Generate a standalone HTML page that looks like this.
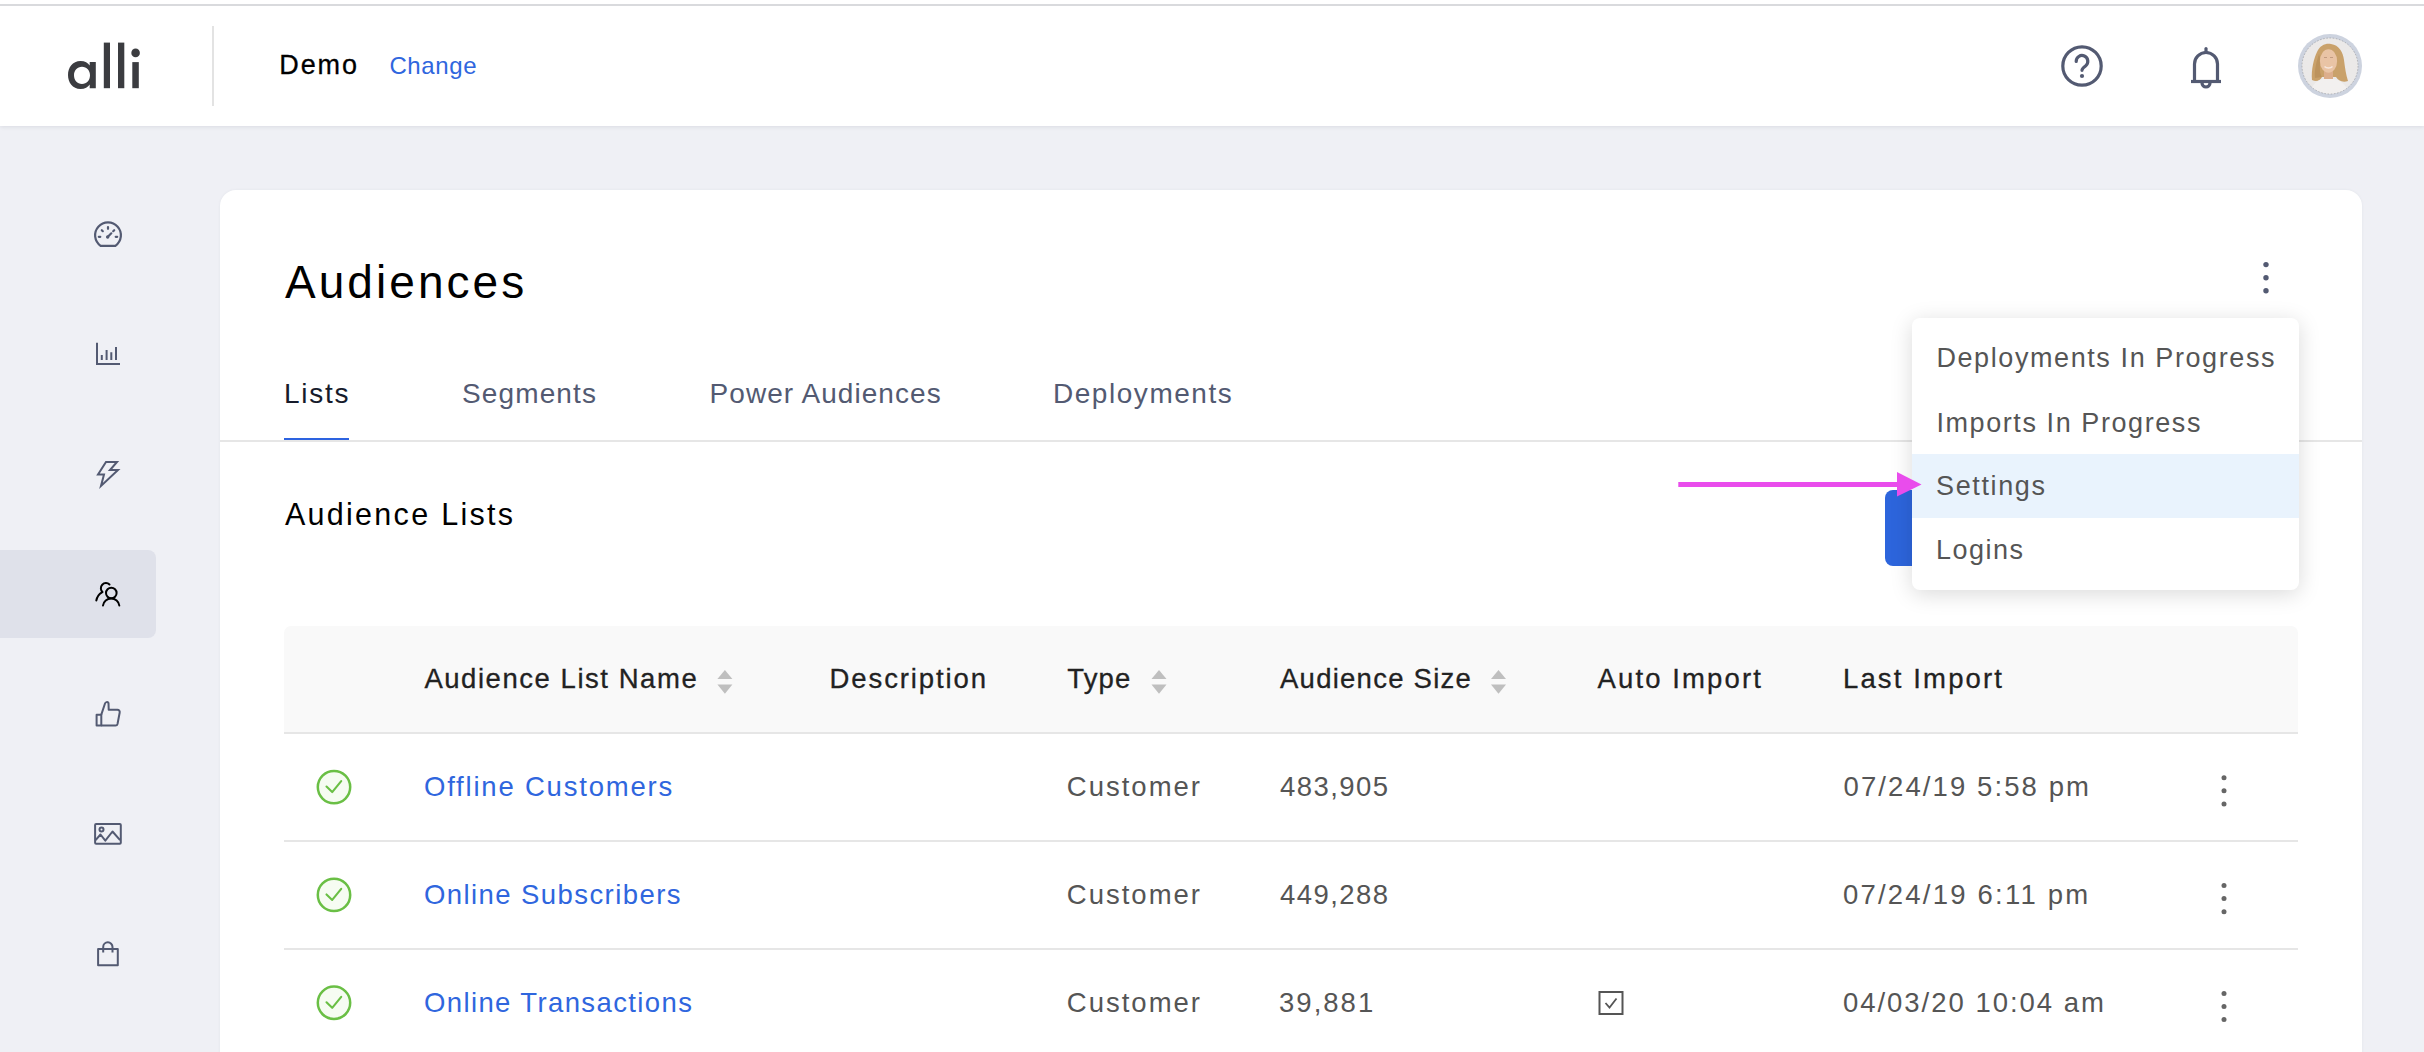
<!DOCTYPE html><html><head><meta charset="utf-8"><style>
*{margin:0;padding:0;box-sizing:border-box}
html,body{width:2424px;height:1052px;overflow:hidden;background:#eff0f5;font-family:"Liberation Sans",sans-serif}
.t{position:absolute;white-space:nowrap}
.abs{position:absolute}
svg{position:absolute;left:0;top:0;overflow:visible}
</style></head><body><div class="abs" style="left:0;top:0;width:2424px;height:126px;background:#fff;box-shadow:0 1px 4px rgba(40,45,70,0.10)"></div>
<div class="abs" style="left:0;top:4px;width:2424px;height:2px;background:#d9dadd"></div>
<div class="abs" style="left:212px;top:26px;width:2px;height:80px;background:#e3e3e3"></div>
<svg width="2424" height="1052" style="pointer-events:none">
<g fill="#3b3c40">
<path fill-rule="evenodd" d="M80.5,61 C72.5,61 68,67.5 68,75 C68,82.5 72.5,89 80.5,89 C85,89 88,87 89.7,84.5 V88.2 H95.8 V62.1 H89.7 V65.5 C88,63 85,61 80.5,61 Z M82,66.8 C86.8,66.8 90,70.5 90,75.3 C90,80.2 86.8,83.9 82,83.9 C77.2,83.9 74,80.2 74,75.3 C74,70.5 77.2,66.8 82,66.8 Z"/>
<rect x="103.8" y="42.6" width="6.2" height="45.6"/>
<rect x="118" y="42.6" width="6.3" height="45.6"/>
<rect x="132.3" y="62.1" width="6.5" height="26.1"/>
<circle cx="135.6" cy="52.9" r="4.3"/>
</g>
</svg>
<div class="t" style="left:279.30px;top:51.54px;font-size:27px;line-height:27px;letter-spacing:1.9px;color:#000;-webkit-text-stroke:0.3px #000">Demo</div>
<div class="t" style="left:389.40px;top:54.48px;font-size:24px;line-height:24px;letter-spacing:0.62px;color:#2f66de;">Change</div>
<svg width="2424" height="1052">
<g fill="none" stroke="#535a72" stroke-width="3.2" stroke-linecap="round" stroke-linejoin="round">
<circle cx="2082" cy="66" r="19.2"/>
<path d="M2076.2,61.5 a5.8,5.8 0 1 1 9.5,4.3 c-2.2,1.7 -3.7,2.8 -3.7,4.5"/>
<path d="M2194.5,81.5 V64 a11.5,11.5 0 0 1 23,0 V81.5"/>
<path d="M2191,81.5 H2221" stroke-linecap="butt"/>
<path d="M2206,48.5 V52"/>
<path d="M2202,83 a4,4 0 0 0 8,0"/>
</g>
<circle cx="2082" cy="76" r="2.1" fill="#535a72"/>
</svg>
<svg width="2424" height="1052">
<defs><clipPath id="av"><circle cx="2330" cy="66" r="28"/></clipPath></defs>
<circle cx="2330" cy="66" r="32" fill="#cdd3df"/>
<circle cx="2330" cy="66" r="28" fill="#ebe9e8"/>
<g clip-path="url(#av)">
<path d="M2312,80 C2311,70 2314,58 2317,52 C2320,45 2326,43 2331,44 C2339,45 2343,52 2344,60 C2345,68 2346,75 2348,81 C2342,83 2338,80 2336,77 L2322,77 C2320,81 2316,82 2312,80 Z" fill="#c9a16a"/>
<path d="M2315,78 C2314,70 2317,60 2319,54 L2321,60 C2319,68 2320,74 2322,77 Z" fill="#b48a55" opacity="0.6"/>
<rect x="2324" y="69" width="9" height="11" fill="#dcae8c"/>
<ellipse cx="2328.5" cy="61" rx="8.6" ry="11.8" fill="#e9c4a5"/>
<path d="M2324.5,66.5 C2326.5,68.5 2330.5,68.5 2332.5,66.5" fill="none" stroke="#f6e6dc" stroke-width="1.6"/>
<path d="M2324,57.5 h3 M2330,57.5 h3" stroke="#a07a62" stroke-width="0.9" opacity="0.6"/>
<path d="M2308,96 C2311,86 2317,80 2323,79 L2334,79 C2341,80 2347,86 2351,96 Z" fill="#f2f0ef"/>
</g>
<circle cx="2330" cy="66" r="28" fill="none" stroke="#666" stroke-width="0.7" stroke-dasharray="1.6 1.6" opacity="0.5"/>
</svg>
<div class="abs" style="left:0;top:550px;width:156px;height:88px;background:#dfe1ea;border-radius:0 8px 8px 0"></div>
<svg width="2424" height="1052">
<g transform="translate(0,0.8)">
<g fill="none" stroke="#535a72" stroke-width="2.2" stroke-linecap="round" stroke-linejoin="round">
<path d="M100.6,245 A12.9,12.9 0 1 1 115.4,245 Z"/>
<path d="M108,226.3 V228 M101.8,229.4 L102.8,230.4 M114.2,229.4 L113.2,230.4 M98.8,236 H100.3 M115.7,236 H117.2"/>
<path d="M107.6,236.2 L111.3,232.5"/>
</g>
<circle cx="107.7" cy="236.2" r="1.7" fill="#535a72"/></g>
<g fill="none" stroke="#535a72" stroke-width="2" stroke-linecap="butt">
<path d="M97,342.8 V364 H120"/>
<path d="M101.8,355 V360 M106.6,350 V360 M111.3,352.3 V360 M116,347 V360"/>
</g>
<polygon points="106,462 117,462 110,470 118,470 101,486 104,474.5 98,474.5" fill="none" stroke="#535a72" stroke-width="2" stroke-linejoin="miter"/>
<g fill="none" stroke="#000" stroke-width="2" stroke-linecap="round">
<path d="M109.5,584.5 A5,5 0 1 0 102.5,592"/>
<path d="M102,592.3 C99,594 97,597 96.3,600.5"/>
<circle cx="111.3" cy="593" r="5.3"/>
<path d="M103,605.5 C103.5,601.5 107,598.5 111.2,598.5 C115.4,598.5 118.8,601.5 119.3,605.5"/>
</g>
<g fill="none" stroke="#535a72" stroke-width="2" stroke-linejoin="round">
<rect x="96.6" y="714.8" width="4.7" height="10.8"/>
<path d="M101.3,714.6 L105,703.5 C105.5,702 107.5,701.5 108.5,703 L108.7,709.7 H117.5 C119,709.7 120,711 119.7,712.5 L117.5,724 C117.2,725.2 116.5,725.6 115.5,725.6 H101.3"/>
</g>
<g fill="none" stroke="#535a72" stroke-width="2" stroke-linejoin="round">
<rect x="95.1" y="823.9" width="25.7" height="19.9" rx="1"/>
<circle cx="101.5" cy="829.4" r="2"/>
<path d="M95.6,840.2 L100.5,834.5 L105.3,840.6 L112.5,831.5 L120.1,840.2"/>
<rect x="98.1" y="948.9" width="19.7" height="16.4"/>
<path d="M103.2,952.6 V947 A4.65,4.65 0 0 1 112.5,947 V952.6"/>
</g>
</svg>
<div class="abs" style="left:220px;top:190px;width:2142px;height:900px;background:#fff;border-radius:16px;box-shadow:0 0 3px rgba(40,45,70,0.06)"></div>
<div class="t" style="left:285.00px;top:258.96px;font-size:46px;line-height:46px;letter-spacing:3.05px;color:#000;">Audiences</div>
<svg width="2424" height="1052"><g fill="#535a72">
<circle cx="2266" cy="264.6" r="2.7"/><circle cx="2266" cy="277.7" r="2.7"/><circle cx="2266" cy="290.8" r="2.7"/></g></svg>
<div class="abs" style="left:220px;top:440px;width:2142px;height:2px;background:#e6e6e6"></div>
<div class="abs" style="left:284px;top:438px;width:65px;height:2px;background:#2d63e0"></div>
<div class="t" style="left:284.00px;top:379.50px;font-size:28px;line-height:28px;letter-spacing:1.71px;color:#161b2b;">Lists</div>
<div class="t" style="left:462.00px;top:379.50px;font-size:28px;line-height:28px;letter-spacing:1.13px;color:#535a72;">Segments</div>
<div class="t" style="left:709.60px;top:379.50px;font-size:28px;line-height:28px;letter-spacing:1.05px;color:#535a72;">Power Audiences</div>
<div class="t" style="left:1053.00px;top:379.50px;font-size:28px;line-height:28px;letter-spacing:1.54px;color:#535a72;">Deployments</div>
<div class="t" style="left:284.90px;top:499.28px;font-size:30.5px;line-height:30.5px;letter-spacing:2.29px;color:#000;">Audience Lists</div>
<div class="abs" style="left:1885px;top:490px;width:300px;height:76px;background:#2d65dc;border-radius:8px"></div>
<div class="abs" style="left:284px;top:626px;width:2014px;height:106px;background:#f9f9f9;border-radius:7px 7px 0 0"></div>
<div class="abs" style="left:284px;top:732px;width:2014px;height:2px;background:#e6e6e6"></div>
<div class="abs" style="left:284px;top:840px;width:2014px;height:2px;background:#e6e6e6"></div>
<div class="abs" style="left:284px;top:948px;width:2014px;height:2px;background:#e6e6e6"></div>
<div class="t" style="left:424.40px;top:665.22px;font-size:27.5px;line-height:27.5px;letter-spacing:1.54px;color:#222;-webkit-text-stroke:0.3px #222">Audience List Name</div>
<div class="t" style="left:829.60px;top:665.22px;font-size:27.5px;line-height:27.5px;letter-spacing:1.88px;color:#222;-webkit-text-stroke:0.3px #222">Description</div>
<div class="t" style="left:1067.20px;top:665.22px;font-size:27.5px;line-height:27.5px;letter-spacing:1.19px;color:#222;-webkit-text-stroke:0.3px #222">Type</div>
<div class="t" style="left:1280.00px;top:665.22px;font-size:27.5px;line-height:27.5px;letter-spacing:1.25px;color:#222;-webkit-text-stroke:0.3px #222">Audience Size</div>
<div class="t" style="left:1597.60px;top:665.22px;font-size:27.5px;line-height:27.5px;letter-spacing:2.11px;color:#222;-webkit-text-stroke:0.3px #222">Auto Import</div>
<div class="t" style="left:1843.00px;top:665.22px;font-size:27.5px;line-height:27.5px;letter-spacing:2.14px;color:#222;-webkit-text-stroke:0.3px #222">Last Import</div>
<svg width="2424" height="1052"><g fill="#bfbfbf"><polygon points="717.4,679 732.4,679 724.9,670"/><polygon points="717.4,684.5 732.4,684.5 724.9,693.7"/><polygon points="1151.5,679 1166.5,679 1159.0,670"/><polygon points="1151.5,684.5 1166.5,684.5 1159.0,693.7"/><polygon points="1491,679 1506,679 1498.5,670"/><polygon points="1491,684.5 1506,684.5 1498.5,693.7"/></g></svg>
<div class="t" style="left:424.00px;top:773.32px;font-size:27.5px;line-height:27.5px;letter-spacing:1.79px;color:#2f66de;">Offline Customers</div>
<div class="t" style="left:1066.80px;top:773.32px;font-size:27.5px;line-height:27.5px;letter-spacing:2.0px;color:#555;">Customer</div>
<div class="t" style="left:1280.00px;top:773.32px;font-size:27.5px;line-height:27.5px;letter-spacing:1.43px;color:#555;">483,905</div>
<div class="t" style="left:1843.60px;top:773.32px;font-size:27.5px;line-height:27.5px;letter-spacing:2.09px;color:#555;">07/24/19 5:58 pm</div>
<div class="t" style="left:424.00px;top:881.12px;font-size:27.5px;line-height:27.5px;letter-spacing:1.42px;color:#2f66de;">Online Subscribers</div>
<div class="t" style="left:1066.80px;top:881.12px;font-size:27.5px;line-height:27.5px;letter-spacing:2.0px;color:#555;">Customer</div>
<div class="t" style="left:1280.00px;top:881.12px;font-size:27.5px;line-height:27.5px;letter-spacing:1.43px;color:#555;">449,288</div>
<div class="t" style="left:1842.90px;top:881.12px;font-size:27.5px;line-height:27.5px;letter-spacing:2.22px;color:#555;">07/24/19 6:11 pm</div>
<div class="t" style="left:424.00px;top:989.02px;font-size:27.5px;line-height:27.5px;letter-spacing:1.38px;color:#2f66de;">Online Transactions</div>
<div class="t" style="left:1066.80px;top:989.02px;font-size:27.5px;line-height:27.5px;letter-spacing:2.0px;color:#555;">Customer</div>
<div class="t" style="left:1279.00px;top:989.02px;font-size:27.5px;line-height:27.5px;letter-spacing:2.02px;color:#555;">39,881</div>
<div class="t" style="left:1842.90px;top:989.02px;font-size:27.5px;line-height:27.5px;letter-spacing:1.98px;color:#555;">04/03/20 10:04 am</div>
<svg width="2424" height="1052"><circle cx="334" cy="787.1" r="16.2" fill="#f6fcf2" stroke="#6abf45" stroke-width="2.5"/><path d="M326.5,786.6 L332.2,792.1 L341.2,781.1" fill="none" stroke="#6abf45" stroke-width="2.1" stroke-linecap="round" stroke-linejoin="round"/><circle cx="2224" cy="777.7" r="2.5" fill="#666"/><circle cx="2224" cy="790.8000000000001" r="2.5" fill="#666"/><circle cx="2224" cy="803.9000000000001" r="2.5" fill="#666"/><circle cx="334" cy="894.9" r="16.2" fill="#f6fcf2" stroke="#6abf45" stroke-width="2.5"/><path d="M326.5,894.4 L332.2,899.9 L341.2,888.9" fill="none" stroke="#6abf45" stroke-width="2.1" stroke-linecap="round" stroke-linejoin="round"/><circle cx="2224" cy="885.5" r="2.5" fill="#666"/><circle cx="2224" cy="898.6" r="2.5" fill="#666"/><circle cx="2224" cy="911.7" r="2.5" fill="#666"/><circle cx="334" cy="1002.8" r="16.2" fill="#f6fcf2" stroke="#6abf45" stroke-width="2.5"/><path d="M326.5,1002.3 L332.2,1007.8 L341.2,996.8" fill="none" stroke="#6abf45" stroke-width="2.1" stroke-linecap="round" stroke-linejoin="round"/><circle cx="2224" cy="993.4" r="2.5" fill="#666"/><circle cx="2224" cy="1006.5" r="2.5" fill="#666"/><circle cx="2224" cy="1019.6" r="2.5" fill="#666"/><rect x="1599.5" y="992" width="23" height="22" fill="none" stroke="#555" stroke-width="2"/><path d="M1605.5,1003 L1609.5,1007.5 L1616.5,998.5" fill="none" stroke="#555" stroke-width="1.8"/></svg>
<div class="abs" style="left:1912px;top:318px;width:387px;height:272px;background:#fff;border-radius:8px;box-shadow:0 4px 22px rgba(0,0,0,0.15)"></div>
<div class="abs" style="left:1912px;top:454px;width:387px;height:64px;background:#e9f3fd"></div>
<div class="t" style="left:1936.40px;top:345.14px;font-size:27px;line-height:27px;letter-spacing:1.59px;color:#555;">Deployments In Progress</div>
<div class="t" style="left:1936.40px;top:409.74px;font-size:27px;line-height:27px;letter-spacing:1.58px;color:#555;">Imports In Progress</div>
<div class="t" style="left:1936.00px;top:473.14px;font-size:27px;line-height:27px;letter-spacing:1.62px;color:#555;">Settings</div>
<div class="t" style="left:1936.00px;top:537.44px;font-size:27px;line-height:27px;letter-spacing:1.49px;color:#555;">Logins</div>
<svg width="2424" height="1052"><g fill="#e94cec">
<rect x="1678.3" y="482" width="222" height="5"/>
<polygon points="1897,472 1921.5,484.4 1897,496.5"/></g></svg></body></html>
